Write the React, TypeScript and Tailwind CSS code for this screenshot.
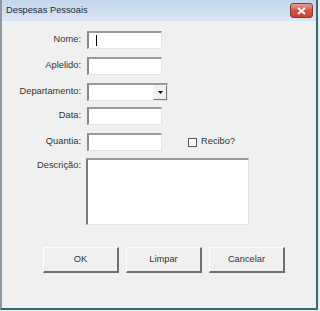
import React from "react";

const font = { fontFamily: '"Liberation Sans", Arial, sans-serif' };

function Field({ label, children, className = "" }: { label: string; children: React.ReactNode; className?: string }) {
	return (
		<div className={`flex items-center ${className}`}>
			<div className="w-[80px] pr-[1px] text-right text-[9.3px] text-[#333]">{label}</div>
			<div className="ml-[5px]">{children}</div>
		</div>
	);
}

function TextBox({ width = 75, cursor = false }: { width?: number; cursor?: boolean }) {
	return (
		<div
			className="relative h-[18px] border-t-2 border-l-2 border-r border-b border-t-[#9a9a9a] border-l-[#8a8a8a] border-r-[#e4e4e4] border-b-[#e4e4e4] bg-white"
			style={{ width }}
		>
			{cursor && <div className="absolute left-[7px] top-[2px] h-[11px] w-px bg-black" />}
		</div>
	);
}

export default function App() {
	return (
		<div className="w-[320px] h-[311px] bg-[#e8eef2]" style={font}>
			<div className="flex h-[310px] w-[318px] flex-col border-l-2 border-r-2 border-b-2 border-l-[#8d9aa6] border-r-[#2f6f73] border-b-[#2f6f73] bg-[#f0f0f0]">
				{/* Title bar */}
				<div className="flex h-[21px] items-center justify-between bg-gradient-to-b from-[#c3d6ec] to-[#dbe6f3] pl-[4px] pr-[3px]">
					<span className="text-[9.3px] text-[#1e2b3a]">Despesas Pessoais</span>
					<div className="flex h-[15px] w-[23px] items-center justify-center rounded-[3px] border border-[#8a3b30] bg-gradient-to-b from-[#e7a196] via-[#d2553f] to-[#c8452f]">
						<svg width="9" height="8" viewBox="0 0 9 8">
							<path d="M1 1 L8 7 M8 1 L1 7" stroke="#fff" strokeWidth="2" />
						</svg>
					</div>
				</div>

				{/* Form */}
				<div className="flex flex-1 flex-col pt-[10px]">
					<Field label="Nome:">
						<TextBox cursor />
					</Field>
					<Field label="Aplelido:" className="mt-[8px]">
						<TextBox />
					</Field>
					<Field label="Departamento:" className="mt-[8px]">
						<div className="flex h-[18px] w-[81px] border-t-2 border-l-2 border-r border-b border-t-[#9a9a9a] border-l-[#8a8a8a] border-r-[#e4e4e4] border-b-[#e4e4e4] bg-white">
							<div className="flex-1" />
							<div className="flex w-[14px] items-center justify-center border-l border-t border-l-[#f5f5f5] border-t-[#f5f5f5] border-r border-b border-r-[#777] border-b-[#777] bg-[#f0f0f0]">
								<svg width="5" height="3" viewBox="0 0 5 3">
									<path d="M0 0 H5 L2.5 3 Z" fill="#000" />
								</svg>
							</div>
						</div>
					</Field>
					<Field label="Data:" className="mt-[6px]">
						<TextBox />
					</Field>
					<div className="mt-[8px] flex items-center">
						<Field label="Quantia:">
							<TextBox />
						</Field>
						<div className="ml-[26px] flex items-center">
							<div className="h-[9px] w-[9px] border border-[#555] bg-white" />
							<span className="ml-[4px] text-[9.3px] text-[#333]">Recibo?</span>
						</div>
					</div>
					<div className="mt-[7px] flex">
						<div className="w-[80px] pr-[1px] pt-[1px] text-right text-[9.3px] text-[#333]">Descrição:</div>
						<div className="ml-[4px] h-[67px] w-[163px] border-t-2 border-l-2 border-r border-b border-t-[#9a9a9a] border-l-[#7a7a7a] border-r-[#e4e4e4] border-b-[#e4e4e4] bg-white" />
					</div>

					{/* Buttons */}
					<div className="mt-[22px] flex gap-[7px] pl-[41px]">
						{["OK", "Limpar", "Cancelar"].map(t => (
							<div
								key={t}
								className="flex h-[26px] w-[76px] items-center justify-center border-t border-l border-t-[#fcfcfc] border-l-[#fcfcfc] border-r-2 border-b-2 border-r-[#6f6f6f] border-b-[#6f6f6f] bg-[#f0f0f0] text-[9.3px] text-[#333]"
							>
								{t}
							</div>
						))}
					</div>
				</div>
			</div>
		</div>
	);
}
